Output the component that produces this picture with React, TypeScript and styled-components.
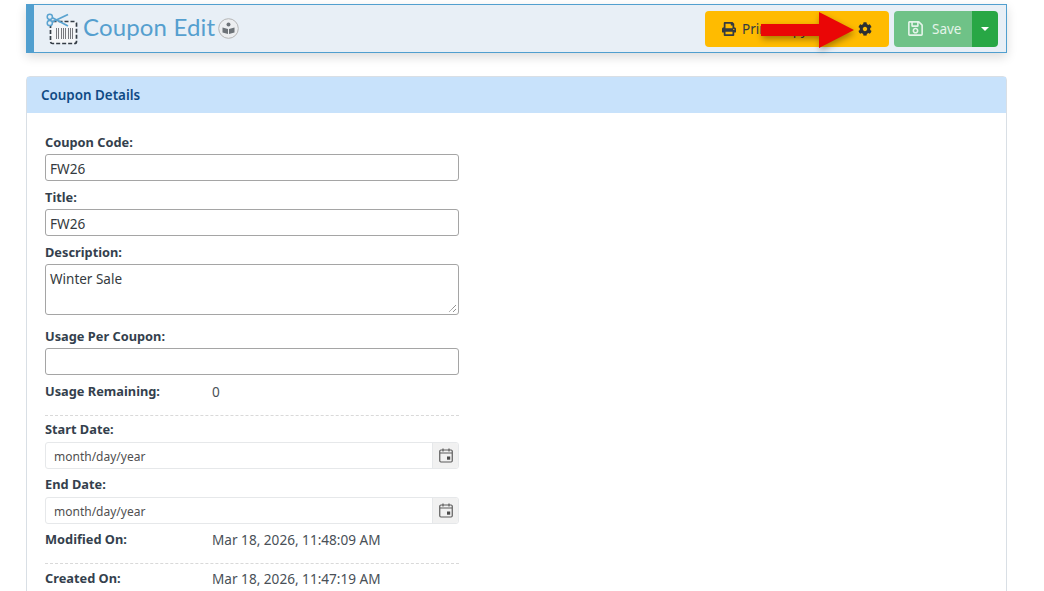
import React from "react";
import styled, { createGlobalStyle } from "styled-components";
import { FaPrint, FaCog, FaRegSave } from "react-icons/fa";

const Global = createGlobalStyle`
  html, body { margin: 0; padding: 0; height: 591px; overflow: hidden; background: #fff; }
  body { font-family: "Noto Sans", "Open Sans", sans-serif; color: #343a40; }
  * { box-sizing: border-box; }
`;
const Page = styled.div`
  position: relative;
  height: 591px;
  overflow: hidden;
  padding: 4px 37px 0 26px;
`;
const TitleBar = styled.header`
  height: 49px;
  display: flex;
  align-items: center;
  justify-content: space-between;
  background: #e8eff6;
  border: 1px solid #519fcf;
  border-left-width: 8px;
  padding: 0 8px 0 12px;
  box-shadow: 0 4px 10px rgba(0,0,0,.14);
`;
const TitleGroup = styled.div`
  display: flex;
  align-items: center;
`;
const Title = styled.h1`
  margin: 0 3px 3px 4px;
  font: 400 24px/30px Lato, sans-serif;
  letter-spacing: .15px;
  color: #559fcf;
`;
const Actions = styled.div`
  display: flex;
  gap: 5px;
`;
const PrintButton = styled.div`
  width: 184px;
  height: 36px;
  display: flex;
  align-items: center;
  background: #ffbb00;
  border-radius: 4px;
  padding: 0 17px;
  font-size: 13.5px;
  color: #343a40;
  gap: 6px;
`;
const GearSlot = styled.span`
  margin-left: auto;
  display: flex;
  font-size: 14px;
  color: #2b2f33;
`;
const SaveGroup = styled.div`
  display: flex;
  height: 36px;
  border-radius: 4px;
  overflow: hidden;
`;
const SaveMain = styled.div`
  width: 78px;
  display: flex;
  align-items: center;
  padding-left: 13px;
  gap: 8px;
  background: #6fc287;
  color: #e4f4e9;
  font-size: 13.5px;
`;
const SaveCaret = styled.div`
  width: 26px;
  display: flex;
  align-items: center;
  justify-content: center;
  background: #28a745;
  &::after {
    content: "";
    border-top: 4px solid #fff;
    border-left: 4px solid transparent;
    border-right: 4px solid transparent;
  }
`;
const Card = styled.section`
  margin-top: 23px;
  height: 600px;
  border: 1px solid #d9dfe5;
  border-radius: 4px 4px 0 0;
`;
const CardHead = styled.div`
  height: 36px;
  display: flex;
  align-items: center;
  padding-left: 14px;
  background: #c8e2fb;
  color: #0f4a84;
  font-size: 13.4px;
  font-weight: 600;
`;
const Form = styled.div`
  width: 414px;
  margin: 20px 0 0 18px;
  display: flex;
  flex-direction: column;
`;
const Label = styled.label`
  display: block;
  height: 21px;
  line-height: 18px;
  font-size: 12.8px;
  font-weight: 700;
  color: #343f4d;
`;
const DateLabel = styled(Label)`
  height: 22px;
`;
const Input = styled.div`
  height: 27px;
  margin-bottom: 7px;
  border: 1px solid #a5a5a5;
  border-radius: 3px;
  padding: 0 4px;
  font-size: 13.6px;
  line-height: 27px;
  color: #343a40;
`;
const TextArea = styled.div`
  position: relative;
  height: 51px;
  margin-bottom: 12px;
  border: 1px solid #a5a5a5;
  border-radius: 3px;
  padding: 4px;
  font-size: 13.5px;
  line-height: 20px;
  color: #343a40;
`;
const Grip = styled.svg`
  position: absolute;
  right: 1px;
  bottom: 1px;
  width: 9px;
  height: 9px;
`;
const InfoRow = styled.div`
  display: flex;
  height: 18px;
  align-items: center;
  font-size: 13.6px;
  color: #495057;
`;
const InfoLabel = styled.span`
  width: 167px;
  font-size: 12.8px;
  font-weight: 700;
  color: #343f4d;
`;
const Divider = styled.hr`
  width: 100%;
  margin: ${(p: { $top: number; $bottom: number }) => `${p.$top}px 0 ${p.$bottom}px`};
  border: 0;
  border-top: 1px dashed #d9d9d9;
`;
const DateBox = styled.div`
  display: flex;
  height: 27px;
  margin-bottom: 6px;
  border: 1px solid #e6e8ea;
  border-radius: 3px;
  overflow: hidden;
`;
const DateText = styled.div`
  flex: 1;
  padding-left: 8px;
  font-size: 12px;
  line-height: 27px;
  color: #4f4f4f;
`;
const DateAddon = styled.div`
  width: 26px;
  display: flex;
  align-items: center;
  justify-content: center;
  background: #f1f1f1;
  border-left: 1px solid #e6e8ea;
`;
const ArrowSvg = styled.svg`
  position: absolute;
  left: 755px;
  top: 6px;
  width: 110px;
  height: 52px;
  overflow: visible;
  filter: drop-shadow(1px 3px 3px rgba(0,0,0,.35));
`;
const Logo = () => (
  <svg width="33" height="32" viewBox="0 0 33 32" fill="none">
    <rect x="4.5" y="8.5" width="26" height="22" rx="2" stroke="#333c45" strokeWidth="1.7" strokeDasharray="4 2" fill="#f4f6f8" />
    <path d="M10.5 15v11M12.5 15v11M15.5 15v11M17.5 15v11M19.5 15v11M22.5 15v11M24.5 15v11M26.5 15v11" stroke="#77797e" strokeWidth="1" />
    <path d="M5 9.5 L22 1.5 M5 4 L22 13" stroke="#5aa3d0" strokeWidth="1.8" />
    <circle cx="3.8" cy="3.8" r="2.6" stroke="#5aa3d0" strokeWidth="1.5" fill="#e8eff6" />
    <circle cx="3.8" cy="10" r="2.6" stroke="#5aa3d0" strokeWidth="1.5" fill="#e8eff6" />
  </svg>
);
const BookBadge = () => (
  <svg width="21" height="21" viewBox="0 0 21 21">
    <circle cx="10.5" cy="10.5" r="9.8" fill="#eceef0" stroke="#b5b5b5" />
    <circle cx="10.5" cy="6.6" r="2" fill="#6d7378" />
    <path d="M4.5 9.5 L10 11 V16 L4.5 14.5Z M16.5 9.5 L11 11 V16 L16.5 14.5Z" fill="#6d7378" />
  </svg>
);
const CalendarIcon = () => (
  <svg width="14" height="15" viewBox="0 0 14 15" fill="none">
    <rect x=".75" y="2" width="12.5" height="12" rx="1.2" stroke="#5c5c5c" strokeWidth="1.2" />
    <path d="M1 5h12" stroke="#5c5c5c" strokeWidth="1.2" />
    <path d="M4 .5v3M10 .5v3" stroke="#5c5c5c" strokeWidth="1.2" />
    <rect x="8" y="8.5" width="3.2" height="3.2" fill="#4a4a4a" />
  </svg>
);
export default function App() {
  return (
    <Page>
      <Global />
      <TitleBar>
        <TitleGroup>
          <Logo />
          <Title>Coupon Edit</Title>
          <BookBadge />
        </TitleGroup>
        <Actions>
          <PrintButton>
            <FaPrint size={14} />
            Print Copy
            <GearSlot><FaCog /></GearSlot>
          </PrintButton>
          <SaveGroup>
            <SaveMain><FaRegSave size={17} />Save</SaveMain>
            <SaveCaret />
          </SaveGroup>
        </Actions>
      </TitleBar>
      <Card>
        <CardHead>Coupon Details</CardHead>
        <Form>
          <Label>Coupon Code:</Label>
          <Input>FW26</Input>
          <Label>Title:</Label>
          <Input>FW26</Input>
          <Label>Description:</Label>
          <TextArea>
            Winter Sale
            <Grip viewBox="0 0 9 9"><path d="M8 1 L1 8 M8 5 L5 8" stroke="#666" strokeWidth="1" strokeDasharray="1 .6" /></Grip>
          </TextArea>
          <Label>Usage Per Coupon:</Label>
          <Input />
          <InfoRow><InfoLabel>Usage Remaining:</InfoLabel>0</InfoRow>
          <Divider $top={15} $bottom={4} />
          <DateLabel>Start Date:</DateLabel>
          <DateBox><DateText>month/day/year</DateText><DateAddon><CalendarIcon /></DateAddon></DateBox>
          <DateLabel>End Date:</DateLabel>
          <DateBox><DateText>month/day/year</DateText><DateAddon><CalendarIcon /></DateAddon></DateBox>
          <InfoRow><InfoLabel>Modified On:</InfoLabel>Mar 18, 2026, 11:48:09 AM</InfoRow>
          <Divider $top={15} $bottom={5} />
          <InfoRow><InfoLabel>Created On:</InfoLabel>Mar 18, 2026, 11:47:19 AM</InfoRow>
        </Form>
      </Card>
      <ArrowSvg viewBox="0 0 110 52">
        <path d="M6 18 H64 V6 L99 24 L64 42 V30 H6 Z" fill="#ea0606" />
      </ArrowSvg>
    </Page>
  );
}
